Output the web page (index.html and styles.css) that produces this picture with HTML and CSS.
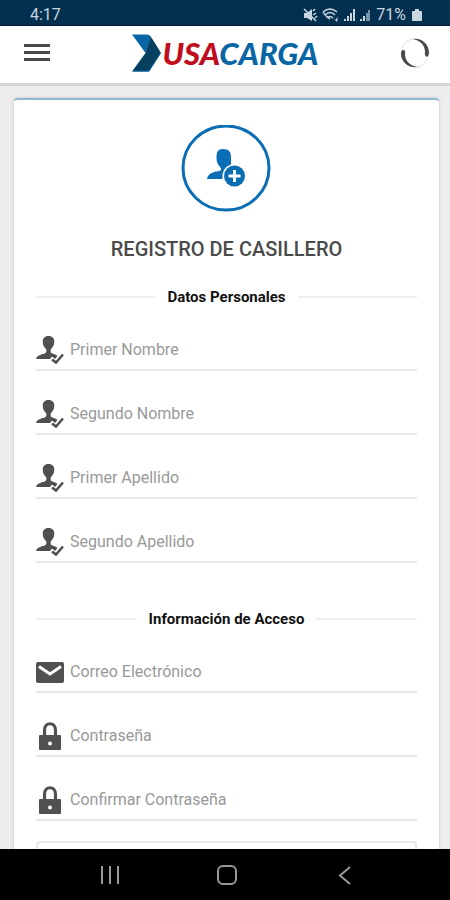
FILE: index.html
```
<!DOCTYPE html>
<html lang="es">
<head>
<meta charset="utf-8">
<meta name="viewport" content="width=device-width, initial-scale=1">
<title>Registro de Casillero</title>
<link rel="stylesheet" href="styles.css">
</head>
<body>
<svg hidden>
  <symbol id="user-check" viewBox="0 0 28 30">
    <path d="M12.500 1C8.600 1 6.500 3.400 6.700 7C6.900 10.500 8.400 12.600 10.300 14.200V17C9.500 19.500 1 18.800 0 24H14L16 21.500L19 24L21.500 21C19.500 18.700 15.300 19 14.700 17V14.200C16.600 12.600 18.100 10.500 18.300 7C18.500 3.400 16.400 1 12.500 1Z"/>
    <path d="M16 24.500L20 27.500L27 19.500" fill="none" stroke="currentColor" stroke-width="2.500"/>
  </symbol>
  <symbol id="mail" viewBox="0 0 28 30">
    <rect y="5" width="28" height="21" rx="2"/>
    <path d="M3 9.500L14 17L25 9.500" fill="none" stroke="#fff" stroke-width="3"/>
  </symbol>
  <symbol id="lock" viewBox="0 0 28 30">
    <path d="M8.500 15V9.500C8.500 0.500 19.500 0.500 19.500 9.500V15" fill="none" stroke="currentColor" stroke-width="3.200"/>
    <rect x="3" y="14" width="22" height="15" rx="1"/>
    <circle cx="14" cy="22.500" r="2" fill="#fff"/>
  </symbol>
</svg>

<div class="status">
  <span>4:17</span>
  <div class="status-icons">
    <svg width="67" height="16" viewBox="0 0 67 16" aria-hidden="true">
      <g fill="none" stroke="currentColor" stroke-width="1.500">
        <path d="M1 2L13 14M10 4L12 2M10 8L13 6M12 11L14 9"/>
        <path d="M20 5Q27 -1 34 5M22 8Q27 3 32 8M24 11Q27 8 30 11M20 5Q22 9 27 12"/>
      </g>
      <path d="M1 6H4L9 2V14L4 11H1ZM28 10L32 13L35 10L34 15L31 12Z"/>
      <path d="M41 12h2v2h-2zM44 9h2v5h-2zM47 6h2v8h-2zM50 2h2v12h-2z"/>
      <path d="M57 12h2v2h-2zM60 9h2v5h-2z"/>
      <path d="M63 6h2v8h-2zM65 3h2v11h-2z" opacity=".6"/>
    </svg>
    <span>71%</span>
    <svg width="10" height="14" viewBox="0 0 10 14" aria-hidden="true"><path d="M3 1h4v2h2q1 0 1 1v8q0 1-1 1H1q-1 0-1-1V4q0-1 1-1h2z"/></svg>
  </div>
</div>

<header class="header">
  <button class="icon-button" type="button" aria-label="Menú">
    <svg width="26" height="20" viewBox="0 0 26 20"><path d="M0 1h26v3H0zM0 8h26v3H0zM0 15h26v3H0z"/></svg>
  </button>
  <a class="logo" href="#">
    <svg width="29" height="38" viewBox="0 0 29 38" aria-hidden="true">
      <path fill="#07405f" d="M13.500 19L18 2Q20 4 29 19L17 37.500H0Z"/>
      <path fill="#0966a4" d="M0 0.500H15Q18 0.500 19 3L13.500 19Z"/>
      <path fill="none" stroke="#0966a4" d="M1 37H17L28.500 19"/>
    </svg>
    <span class="logo-text"><span class="logo-red">USA</span>CARGA</span>
  </a>
  <button class="icon-button" type="button" aria-label="Actualizar">
    <svg width="30" height="30" viewBox="0 0 30 30">
      <path d="M12 1C21-1 29 6 29 14Q29 18 27 19Q24 18 25 14C25 7 20 2 12 1Z"/>
      <path d="M18 29C9 31 1 24 1 16Q1 12 3 12Q6 12 5 16C5 23 10 28 18 29Z"/>
      <path d="M2 10Q5 3 12 1M28 20Q25 27 18 29" fill="none" stroke="#ddd"/>
    </svg>
  </button>
</header>

<main class="content">
  <form class="card">
    <svg class="badge" width="92" height="88" viewBox="0 0 92 88" aria-hidden="true">
      <ellipse cx="45" cy="43" rx="43" ry="42" fill="none" stroke="currentColor" stroke-width="3"/>
      <path d="M42 24C36 24 35.500 28 35.500 33C35.500 38 38 41 40 43V45C38 47 27 46 26 54H41L50 40Q50 36 50 32C50 27 48 24 42 24Z"/>
      <circle cx="53.500" cy="51" r="12" fill="#fff"/>
      <circle cx="53.500" cy="51" r="10.500"/>
      <path d="M53.500 45V57M47.500 51H59.500" stroke="#fff" stroke-width="2.800"/>
    </svg>
    <h1>REGISTRO DE CASILLERO</h1>

    <section class="group">
      <h2>Datos Personales</h2>
      <label class="field"><svg aria-hidden="true"><use href="#user-check"/></svg><input type="text" placeholder="Primer Nombre" aria-label="Primer Nombre"></label>
      <label class="field"><svg aria-hidden="true"><use href="#user-check"/></svg><input type="text" placeholder="Segundo Nombre" aria-label="Segundo Nombre"></label>
      <label class="field"><svg aria-hidden="true"><use href="#user-check"/></svg><input type="text" placeholder="Primer Apellido" aria-label="Primer Apellido"></label>
      <label class="field"><svg aria-hidden="true"><use href="#user-check"/></svg><input type="text" placeholder="Segundo Apellido" aria-label="Segundo Apellido"></label>
    </section>

    <section class="group">
      <h2>Información de Acceso</h2>
      <label class="field"><svg aria-hidden="true"><use href="#mail"/></svg><input type="email" placeholder="Correo Electrónico" aria-label="Correo Electrónico"></label>
      <label class="field"><svg aria-hidden="true"><use href="#lock"/></svg><input type="password" placeholder="Contraseña" aria-label="Contraseña"></label>
      <label class="field"><svg aria-hidden="true"><use href="#lock"/></svg><input type="password" placeholder="Confirmar Contraseña" aria-label="Confirmar Contraseña"></label>
    </section>
    <div class="panel"></div>
  </form>
</main>

<nav class="navbar">
  <button type="button" aria-label="Recientes"><svg width="20" height="20" viewBox="0 0 20 20"><path d="M3 1V19M11 1V19M19 1V19"/></svg></button>
  <button type="button" aria-label="Inicio"><svg width="20" height="20" viewBox="0 0 20 20"><rect x="1" y="1" width="18" height="18" rx="5"/></svg></button>
  <button type="button" aria-label="Atrás"><svg width="20" height="20" viewBox="0 0 20 20"><path d="M15 2L5 10.500L15 19"/></svg></button>
</nav>
</body>
</html>
```
FILE: styles.css
```
* {
  box-sizing: border-box;
}

body {
  margin: 0;
  height: 100vh;
  display: flex;
  flex-direction: column;
  font-family: Roboto, "Liberation Sans", sans-serif;
  background: #ededed;
}

svg {
  display: block;
  fill: currentColor;
  flex: none;
}

svg[hidden] {
  display: none;
}

button {
  padding: 0;
  border: 0;
  background: none;
  color: inherit;
}

.status {
  display: flex;
  justify-content: space-between;
  align-items: center;
  flex: none;
  height: 26px;
  padding: 4px 28px 0 30px;
  border-bottom: 1px solid #0a1238;
  background: #03304f;
  color: #c9d6e2;
  font-size: 16px;
  line-height: 20px;
}

.status-icons {
  display: flex;
  align-items: center;
  gap: 6px;
}

.header {
  display: flex;
  justify-content: space-between;
  align-items: center;
  flex: none;
  height: 60px;
  padding: 0 20px 4px 24px;
  border-bottom: 3px solid #d5d5d5;
  background: #fff;
  color: #4a4a4a;
}

.logo {
  display: flex;
  align-items: center;
  gap: 2px;
  color: #0966a4;
  text-decoration: none;
}

.logo-text {
  font-family: Lato, "Liberation Sans", sans-serif;
  font-size: 31px;
  line-height: 36px;
  font-weight: 900;
  font-style: italic;
}

.logo-red {
  color: #bf0d1e;
}

.content {
  flex: 1;
  min-height: 0;
  overflow-y: auto;
  scrollbar-width: none;
  padding: 12px 11px 0 14px;
}

.card {
  padding: 25px 22px 20px;
  border-top: 2px solid #8db8cd;
  border-radius: 4px;
  background: #fff;
  box-shadow: 0 0 3px #bbb;
}

.badge {
  margin: 0 auto;
  color: #0b6db3;
}

h1 {
  margin: 24px 0 0;
  color: #4a4a4a;
  font-size: 20px;
  line-height: 24px;
  font-weight: 500;
  text-align: center;
}

.group + .group {
  margin-top: 46px;
}

h2 {
  display: flex;
  align-items: center;
  gap: 12px;
  margin: 26px 0 0;
  color: #111;
  font-size: 15px;
  line-height: 20px;
  font-weight: 700;
}

h2::before,
h2::after {
  content: "";
  flex: 1;
  height: 2px;
  background: #eee;
}

.field {
  display: flex;
  align-items: center;
  gap: 6px;
  height: 64px;
  padding-top: 24px;
  border-bottom: 2px solid #e8e8e8;
  color: #505050;
}

.field svg {
  width: 28px;
  height: 30px;
}

.field input {
  flex: 1;
  min-width: 0;
  padding: 0;
  border: 0;
  outline: 0;
  background: none;
  color: #333;
  font-family: inherit;
  font-size: 16px;
  line-height: 20px;
}

.field input::placeholder {
  color: #999;
}

.panel {
  height: 60px;
  margin-top: 20px;
  border: 2px solid #e8e8e8;
  border-radius: 4px;
}

.navbar {
  display: flex;
  justify-content: space-around;
  align-items: center;
  flex: none;
  height: 51px;
  padding: 0 46px 0 50px;
  background: #000;
  color: #999;
}

.navbar svg {
  fill: none;
  stroke: currentColor;
  stroke-width: 2;
}
```
